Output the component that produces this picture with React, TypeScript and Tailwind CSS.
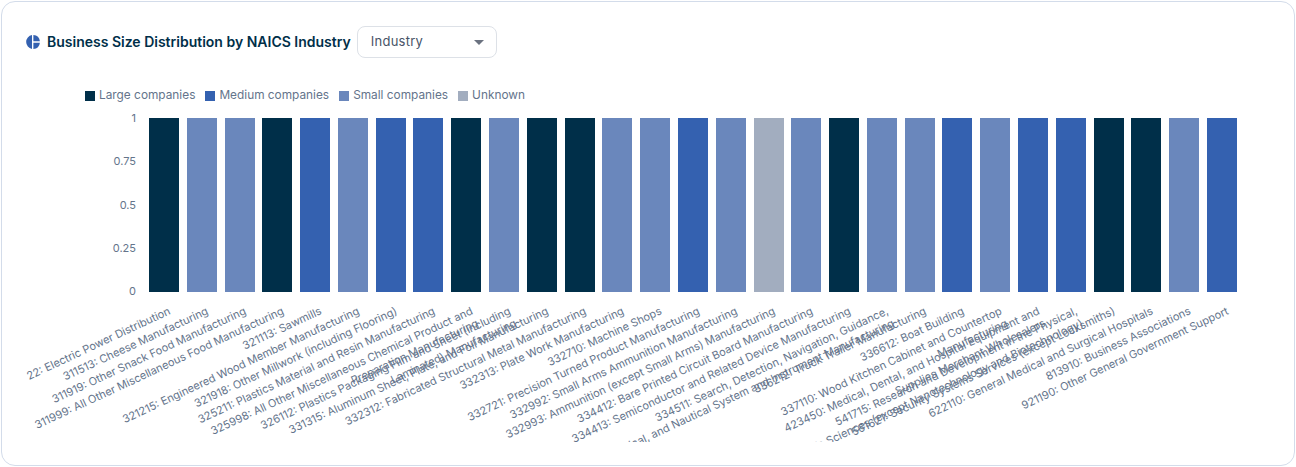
const colors: Record<string, string> = { L: "bg-[#002f49]", M: "bg-[#3461b0]", S: "bg-[#6a87bc]", U: "bg-[#a2adbf]" };
const seq = "LSSLMSMMLSLLSSMSUSLSSMSMMLLSM".split("");

const labels: string[][] = [
  ["22: Electric Power Distribution"],
  ["311513: Cheese Manufacturing"],
  ["311919: Other Snack Food Manufacturing"],
  ["311999: All Other Miscellaneous Food Manufacturing"],
  ["321113: Sawmills"],
  ["321215: Engineered Wood Member Manufacturing"],
  ["321918: Other Millwork (including Flooring)"],
  ["325211: Plastics Material and Resin Manufacturing"],
  ["325998: All Other Miscellaneous Chemical Product and", "Preparation Manufacturing"],
  ["326112: Plastics Packaging Film and Sheet (including", "Laminated) Manufacturing"],
  ["331315: Aluminum Sheet, Plate, and Foil Manufacturing"],
  ["332312: Fabricated Structural Metal Manufacturing"],
  ["332313: Plate Work Manufacturing"],
  ["332710: Machine Shops"],
  ["332721: Precision Turned Product Manufacturing"],
  ["332992: Small Arms Ammunition Manufacturing"],
  ["332993: Ammunition (except Small Arms) Manufacturing"],
  ["334412: Bare Printed Circuit Board Manufacturing"],
  ["334413: Semiconductor and Related Device Manufacturing"],
  ["334511: Search, Detection, Navigation, Guidance,", "Aeronautical, and Nautical System and Instrument Manufacturing"],
  ["336212: Truck Trailer Manufacturing"],
  ["336612: Boat Building"],
  ["337110: Wood Kitchen Cabinet and Countertop", "Manufacturing"],
  ["423450: Medical, Dental, and Hospital Equipment and", "Supplies Merchant Wholesalers"],
  ["541715: Research and Development in the Physical,", "Engineering, and Life Sciences (except Nanotechnology and Biotechnology)"],
  ["561621: Security Systems Services (except Locksmiths)"],
  ["622110: General Medical and Surgical Hospitals"],
  ["813910: Business Associations"],
  ["921190: Other General Government Support"],
];

const legend = [
  ["Large companies", "bg-[#002f49]"],
  ["Medium companies", "bg-[#3461b0]"],
  ["Small companies", "bg-[#6a87bc]"],
  ["Unknown", "bg-[#a2adbf]"],
];

const ticks = ["1", "0.75", "0.5", "0.25", "0"];

export default function App() {
  return (
    <div className="h-[467px] w-[1296px] bg-white p-px font-['Inter',sans-serif]">
      <div className="flex h-[465px] flex-col rounded-[14px] border border-[#d3dcea] bg-white pl-[23px] pr-[57px] pt-6">
        <div className="flex h-8 items-center">
          <svg viewBox="0 0 14 14" className="ml-px h-[14px] w-[14px]">
            <path d="M6 0.1V13.9A7 7 0 0 1 6 0.1Z" fill="#3461b0" />
            <path d="M7.4 0A7 7 0 0 1 13.9 6.2H7.4Z" fill="#3461b0" />
            <path d="M7.4 7.8H13.9A7 7 0 0 1 7.4 14Z" fill="#3461b0" />
          </svg>
          <h2 className="ml-[7px] text-sm font-semibold text-[#002f49]">Business Size Distribution by NAICS Industry</h2>
          <div className="ml-1.5 flex h-8 w-[140px] items-center justify-between rounded-lg border border-[#dde1e7] pl-[13px] pr-3">
            <span className="text-[13px] tracking-[0.02em] text-[#475467]">Industry</span>
            <span className="h-0 w-0 border-x-[5px] border-t-[5px] border-x-transparent border-t-[#6b7280]" />
          </div>
        </div>

        <div className="mt-7 flex h-5 items-center gap-2.5 pl-[60px]">
          {legend.map(([name, c]) => (
            <div key={name} className="flex items-center gap-1">
              <span className={`h-2.5 w-2.5 ${c}`} />
              <span className="text-[11.85px] text-[#64748b]">{name}</span>
            </div>
          ))}
        </div>

        <div className="mt-3 flex h-[174px]">
          <div className="flex w-[111px] flex-col justify-between text-right text-[11px] leading-none text-[#64748b]">
            {ticks.map((t, i) => (
              <span key={t} className={i === 0 ? "-mt-[5px]" : i === 4 ? "-mb-[5px]" : ""}>{t}</span>
            ))}
          </div>
          <div className="flex flex-1 justify-between pl-[13px]">
            {seq.map((c, i) => (
              <div key={i} className={`w-[30px] ${colors[c]}`} />
            ))}
          </div>
        </div>

        <svg width="1296" height="150" className="-ml-6 shrink-0 font-['Inter',sans-serif] text-[11px]" fill="#64748b">
          {labels.map((lines, i) => (
            <g key={i} transform={`translate(${168.5 + i * 37.79} 18) rotate(-25)`}>
              {lines.map((l, j) => (
                <text key={j} x={0} y={j * 13.5 + 4} textAnchor="end">{l}</text>
              ))}
            </g>
          ))}
        </svg>
      </div>
    </div>
  );
}
